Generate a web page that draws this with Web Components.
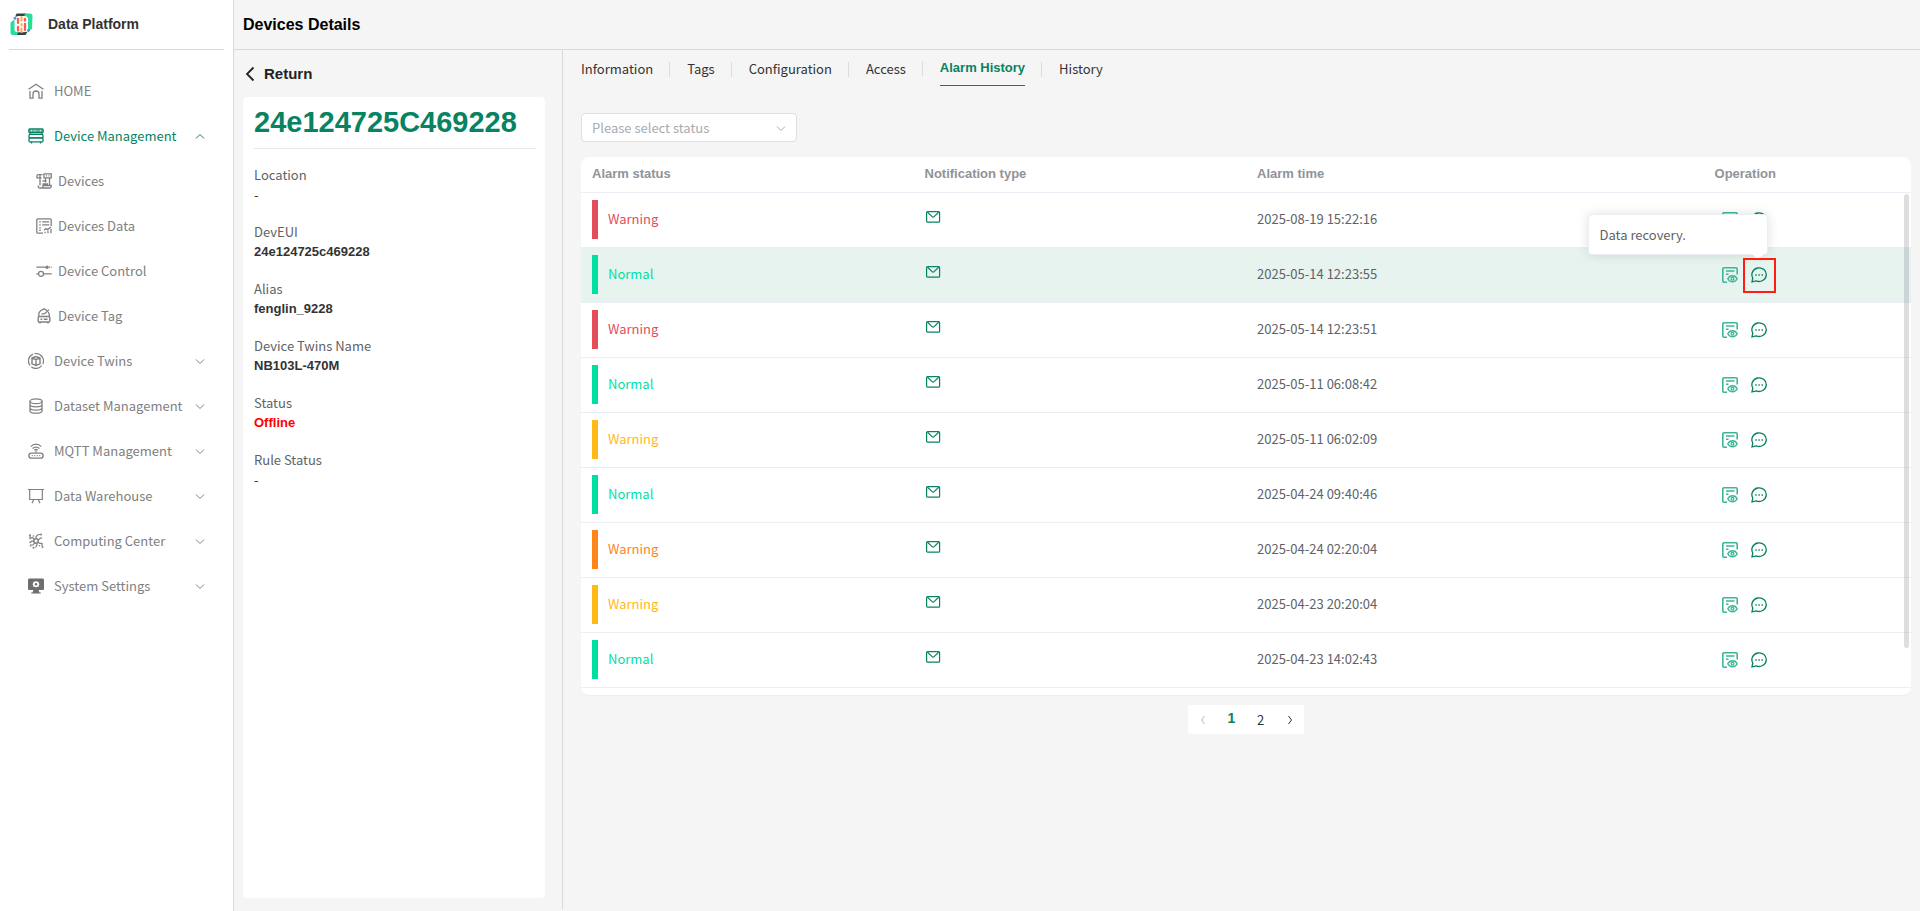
<!DOCTYPE html>
<html lang="en">
<head>
<meta charset="UTF-8">
<meta name="viewport" content="width=device-width, initial-scale=1">
<title>Data Platform</title>
<style>
  html, body {
    margin: 0;
    height: 100%;
  }
  body {
    font-family: "Noto Sans CJK SC", sans-serif;
    font-size: 13px;
    line-height: 20px;
    color: #606266;
    background: #f5f5f5;
    --bold-font: "Liberation Sans", Arial, sans-serif;
    --green: #078263;
    --line: #d9d9d9;
  }
</style>
</head>
<body>
<data-platform>
  <app-sidebar slot="sidebar"></app-sidebar>
  <page-header slot="header">Devices Details</page-header>
  <device-panel slot="panel" name="24e124725C469228">
    <device-field label="Location" class="empty">-</device-field>
    <device-field label="DevEUI">24e124725c469228</device-field>
    <device-field label="Alias">fenglin_9228</device-field>
    <device-field label="Device Twins Name">NB103L-470M</device-field>
    <device-field label="Status" class="offline">Offline</device-field>
    <device-field label="Rule Status" class="empty">-</device-field>
  </device-panel>
  <tab-bar active="Alarm History" tabs="Information,Tags,Configuration,Access,Alarm History,History"></tab-bar>
  <status-select placeholder="Please select status"></status-select>
  <alarm-table></alarm-table>
  <page-nav pages="2" current="1"></page-nav>
</data-platform>

<script>
const ICONS = {
  home: `<path d="M.6 6.300 8 1.200l7.400 5.100M2 8v7.200h3V11a3 3 0 0 1 6 0v4.200h3V8" stroke-width="1.300"/>`,
  server: `<g stroke-width="1.300"><rect x=".8" y=".9" width="14.400" height="3.600" rx="1" fill="currentColor" fill-opacity=".6"/><rect x="1" y="6.400" width="14" height="3.500" rx="1"/><rect x="1" y="9.900" width="14" height="4" rx="1"/><path d="M3.500 13.800v1.700M12.500 13.800v1.700M2 4.800v1.500M14 4.800v1.500"/></g><path d="M3 2.700h1M6.500 2.700h1M12 2.700h1" stroke="#fff"/>`,
  devices: `<path d="M1 5V2.800a1.200 1.200 0 0 1 1.200-1.200h4.300M.5 4.800h5M4 2v10.500M8 .8h7.300v4H8zM10 2.800h1M12.500 2.800h1M9.500 5v4.500M6.500 8h4M6.500 11h5.500M13.500 5v7M2.200 12.500v1a1.500 1.500 0 0 0 1.500 1.500h10a1.500 1.500 0 0 0 1.500-1.500v-1H7v1a1.500 1.500 0 0 1-1.500 1.500" stroke-width="1.300"/>`,
  data: `<path d="M7 15.200H1.800a1 1 0 0 1-1-1V1.800a1 1 0 0 1 1-1h12.400a1 1 0 0 1 1 1V8M3.200 3.800h1.600M6.200 3.800h7M3.200 6.800h1.600M6.200 6.800h7M3.200 9.800h1.600M3.200 12.400h1.600M9 15.300v-1.500M12 15.300v-2.500M15 15.300V11M8 12.200l2-1.600 1.500 1L15 9" stroke-width="1.300"/>`,
  control: `<path d="M.3 4.200h9M12.800 4.200H14M14.800 4.200h1M.3 10.800h2.200M7.700 10.800h8" stroke-width="1.300"/><circle cx="5" cy="10.800" r="2.500" stroke-width="1.300"/><circle cx="11" cy="4.200" r="1.700" fill="currentColor" stroke="none"/>`,
  tag: `<path d="M2.800 8.500V6C3 3.500 5 2 8 .8l3 1.700M13.200 8.500V6l-1-2M13 1.800 8.500 5.800M5.500 5.800h3" stroke-width="1.300"/><rect x="2.200" y="8.500" width="11.600" height="5.500" rx="1" stroke-width="1.400"/><path d="M4.500 11.200h1.800M7.800 11.200h3.700M4 14v1.600M12 14v1.600" stroke-width="1.400"/>`,
  twins: `<path d="M5 1.100A7.400 7.400 0 0 0 2 12.400M3.300 13.800A7.400 7.400 0 0 0 13.900 12.500M14.800 11A7.400 7.400 0 0 0 6.500.7" stroke-width="1.200"/><path d="m4 5 4-1.500L12 5v5.800l-4 1.700-4-1.700zM4 5.200l4 1.300 4-1.300M8 6.500v6" stroke-width="1.400"/><circle cx="13.700" cy="3" r=".8" fill="currentColor" stroke="none"/>`,
  dataset: `<g stroke-width="1.300"><ellipse cx="8" cy="3.200" rx="6" ry="2.400"/><path d="M2 3.200v9.500c0 1.300 2.700 2.500 6 2.500s6-1.200 6-2.500V3.200M2 6.500c0 1.300 2.700 2.300 6 2.300s6-1 6-2.300M2 9.700c0 1.300 2.700 2.400 6 2.400s6-1.100 6-2.400"/></g>`,
  mqtt: `<path d="M2.800 3.600c2.800-3.200 7.600-3.200 10.400 0M4.600 5.500c1.900-1.900 4.900-1.900 6.800 0M6.300 7.200c1-.9 2.400-.9 3.400 0M8 7.500v2.300" stroke-width="1.200"/><rect x=".9" y="10.100" width="14.200" height="5" rx="2.400" stroke-width="1.400"/><path d="M3.800 12.600h1M6.200 12.600h1M8.700 12.600h1M11.200 12.600h1" stroke-width="1.300"/>`,
  warehouse: `<path d="M0 1.500h16M1.700 1.500v10h12.600v-10M5.800 11.500 4 15.300M10.200 11.500l1.800 3.800" stroke-width="1.200"/>`,
  computing: `<circle cx="8" cy="8" r="2.200" stroke-width="1.500"/><path d="M8 5.500V3.500l2.500-2H13M10.300 7.200l2-2H14M10.200 9.500l1.500.8H14V13M8.500 10.500 9 12l-1.500 2.500M6.500 10 5 12H2.500v1.500M5.500 8.200H3.500L1.500 10M6 6.200 4.500 4.500 2 5.500V2.500" stroke-width="1.200"/><g fill="currentColor" stroke="none"><circle cx="13" cy="1.400" r="1"/><circle cx="14.500" cy="14" r="1"/><circle cx="2" cy="2.200" r="1"/><circle cx="5.500" cy="14.700" r="1"/><circle cx="11.500" cy="12.800" r=".8"/><circle cx="5.500" cy="3" r=".8"/></g>`,
  settings: `<g stroke="none"><rect y=".6" width="16" height="11.400" rx="1.200" fill="#6e6e6e"/><path d="M5.500 12h5l1 2.500h1.300v1H3.200v-1h1.300z" fill="#6e6e6e"/><path d="M8 3.100l1.200.7 1.400-.1.100 1.400.8 1.200-.8 1.200-.1 1.400-1.400-.1-1.200.7-1.200-.7-1.400.1-.1-1.400-.8-1.200.8-1.200.1-1.400 1.400.1z" fill="#fff"/><circle cx="8" cy="6.300" r="1.200" fill="#6e6e6e"/></g>`,
  up: `<path d="m4 10.500 4-4 4 4"/>`,
  down: `<path d="m4 6.500 4 4 4-4"/>`,
  prev: `<path d="m9.500 4-3 4 3 4"/>`,
  next: `<path d="m6.500 4 3 4-3 4"/>`,
  back: `<path d="M10.500 1.500 4 8l6.500 6.500" stroke-width="1.800"/>`,
  mail: `<rect x="1.600" y="2.600" width="13" height="10.600" rx="1" stroke-width="1.200"/><path d="m2.500 3.300 4.600 4.300a1.500 1.500 0 0 0 2 0l4.600-4.300" stroke-width="1.200"/>`,
  detail: `<path d="M5 15.200H2A1.200 1.200 0 0 1 .8 14V2A1.200 1.200 0 0 1 2 .8h12A1.200 1.200 0 0 1 15.200 2v5.500" stroke-width="1.600"/><path d="M4 4h8.500M4 7.200h2.500" stroke-width="1.400"/><path d="M5.800 11.700c2-4 7.400-4 9.400 0-2 4-7.400 4-9.400 0z" stroke-width="1.400"/><circle cx="10.500" cy="11.700" r="1.400" stroke-width="1.300"/>`,
  chat: `<path d="M1.800 11A7.200 6.800 0 1 1 5.200 13.900L1 14.900z" stroke-width="1.300"/><path d="M4.300 7.300h1.400v1.400H4.300zM7.400 7.300h1.400v1.400H7.400zM10.500 7.300h1.400v1.400h-1.400z" fill="currentColor" stroke="none"/>`
};

function icon(name, size = 16) {
  return `<svg width="${size}" height="${size}" viewBox="0 0 16 16" fill="none" stroke="currentColor" aria-hidden="true">${ICONS[name]}</svg>`;
}

const BASE = `
  *, *::before { box-sizing: border-box; }
  svg { display: block; flex: none; }
  button { font: inherit; color: inherit; background: none; border: 0; padding: 0; cursor: pointer; }
  a { color: inherit; text-decoration: none; }
`;

class BaseElement extends HTMLElement {
  constructor() {
    super();
    this.attachShadow({ mode: "open" });
  }

  connectedCallback() {
    this.shadowRoot.innerHTML = `<style>${BASE}${this.styles}</style>${this.template}`;
  }
}

class DataPlatform extends BaseElement {
  get styles() {
    return `
      :host { display: grid; grid-template-columns: 234px 1fr; min-height: 100vh; }
      .page { display: flex; flex-direction: column; min-width: 0; }
      .content { flex: 1; display: grid; grid-template-columns: 329px 1fr; margin-bottom: 2px; }
      main { min-width: 0; padding: 9px 9px 0 18px; }
    `;
  }

  get template() {
    return `
      <slot name="sidebar"></slot>
      <div class="page">
        <slot name="header"></slot>
        <div class="content">
          <slot name="panel"></slot>
          <main><slot></slot></main>
        </div>
      </div>
    `;
  }
}

class AppSidebar extends BaseElement {
  get styles() {
    return `
      :host { display: block; background: #fff; border-right: 1px solid var(--line); }
      .brand {
        display: flex; align-items: center; gap: 15px; height: 50px;
        margin: 0 9px; padding-bottom: 1px; border-bottom: 1px solid var(--line);
        font: bold 14px/20px var(--bold-font); color: #333;
      }
      nav { display: flex; flex-direction: column; padding-top: 18px; }
    `;
  }

  get template() {
    return `
      <div class="brand">
        <svg width="24" height="24" viewBox="0 0 24 24">
          <path d="M8 1.500h9.500L15.500 4H9L6.500 5C6.500 3 7 2 8 1.500z" fill="#2b4b42"/>
          <path d="M16 1.500h5A2.500 2.500 0 0 1 23.500 4l-.5 13-4 2.500V7.500c0-2.300-.8-3.300-3.500-3.500z" fill="#27dd9a"/>
          <path d="M1.500 10.500 5.500 7.500v9c0 2.800 1 3.700 3.500 3.700L8.500 23H4a2.500 2.500 0 0 1-2.500-2.500z" fill="#27dd9a"/>
          <path d="M8 23h8.500l2-3.200c-1.500.4-3 .4-4.500.4H9z" fill="#2b4b42"/>
          <g stroke-width="2" stroke-linecap="round">
            <path d="M9 7v4M9 15v3.500M16 7v1.500M16 12v6" stroke="#f95b55" stroke-width="2.300"/>
            <path d="M12.500 5v3.500M12.500 12v1.500M12.500 16.500V20" stroke="#fdb04c"/>
          </g>
          <circle cx="6" cy="6.300" r="1.400" fill="#418dff"/><circle cx="19.500" cy="18.500" r="1.400" fill="#418dff"/>
        </svg>
        Data Platform
      </div>
      <nav aria-label="Main">
        <nav-item icon="home">HOME</nav-item>
        <nav-item icon="server" arrow="up" class="active">Device Management</nav-item>
        <nav-item icon="devices" class="sub">Devices</nav-item>
        <nav-item icon="data" class="sub">Devices Data</nav-item>
        <nav-item icon="control" class="sub">Device Control</nav-item>
        <nav-item icon="tag" class="sub">Device Tag</nav-item>
        <nav-item icon="twins" arrow="down">Device Twins</nav-item>
        <nav-item icon="dataset" arrow="down">Dataset Management</nav-item>
        <nav-item icon="mqtt" arrow="down">MQTT Management</nav-item>
        <nav-item icon="warehouse" arrow="down">Data Warehouse</nav-item>
        <nav-item icon="computing" arrow="down">Computing Center</nav-item>
        <nav-item icon="settings" arrow="down">System Settings</nav-item>
      </nav>
    `;
  }
}

class NavItem extends BaseElement {
  get styles() {
    return `
      :host { display: block; color: #808080; }
      :host(.active) { color: var(--green); }
      a { display: flex; align-items: center; gap: 10px; height: 45px; padding: 0 25px 0 28px; }
      :host(.sub) a { gap: 6px; padding-left: 36px; }
      .label { flex: 1; white-space: nowrap; }
      .label + svg { margin-left: -10px; }
    `;
  }

  get template() {
    const arrow = this.getAttribute("arrow");
    return `
      <a href="#">
        ${icon(this.getAttribute("icon"))}
        <span class="label"><slot></slot></span>
        ${arrow ? icon(arrow) : ""}
      </a>
    `;
  }
}

class PageHeader extends BaseElement {
  get styles() {
    return `
      :host { display: block; border-bottom: 1px solid var(--line); }
      h1 { margin: 0; padding: 0 9px; font: bold 16px/49px var(--bold-font); color: #000; }
    `;
  }

  get template() {
    return `<h1><slot></slot></h1>`;
  }
}

class DevicePanel extends BaseElement {
  get styles() {
    return `
      :host { display: flex; flex-direction: column; padding: 0 17px 11px 9px; border-right: 1px solid var(--line); }
      .return {
        display: flex; align-items: center; gap: 5px; height: 47px;
        font: bold 15px/20px var(--bold-font); color: #222;
      }
      .card { flex: 1; background: #fff; border-radius: 4px; padding: 0 9px 0 11px; }
      h2 {
        margin: 0 0 16px; height: 52px; border-bottom: 1px solid #e8e8e8;
        font: bold 29px/51px var(--bold-font); color: var(--green);
      }
    `;
  }

  get template() {
    return `
      <button class="return" type="button">${icon("back")}Return</button>
      <section class="card">
        <h2>${this.getAttribute("name")}</h2>
        <slot></slot>
      </section>
    `;
  }
}

class DeviceField extends BaseElement {
  get styles() {
    return `
      :host { display: block; margin-bottom: 18px; }
      .value { height: 19px; font: bold 13px/19px var(--bold-font); color: #333; }
      :host(.offline) .value { color: #f00; }
      :host(.empty) .value { font: inherit; }
    `;
  }

  get template() {
    return `
      <div>${this.getAttribute("label")}</div>
      <div class="value"><slot></slot></div>
    `;
  }
}

class TabBar extends BaseElement {
  get styles() {
    return `
      :host { display: block; }
      nav { display: flex; align-items: flex-start; }
      a { line-height: 20px; color: #333; }
      a + a::before {
        content: ""; display: inline-block; vertical-align: -3px;
        width: 1px; height: 15px; margin: 0 17px 0 16px; background: #dcdcdc;
      }
      .text { display: inline-block; }
      a.active { display: flex; font: bold 13px/17px var(--bold-font); color: var(--green); }
      a.active::before { margin-top: 2px; }
      .active .text { height: 27px; border-bottom: 1px solid var(--green); }
    `;
  }

  get template() {
    const active = this.getAttribute("active");
    const links = this.getAttribute("tabs").split(",").map((tab) =>
      `<a href="#" class="${tab === active ? "active" : ""}"><span class="text">${tab}</span></a>`);
    return `<nav aria-label="Device">${links.join("")}</nav>`;
  }
}

class StatusSelect extends BaseElement {
  get styles() {
    return `
      :host { display: block; margin: 27px 0 15px; }
      label { display: grid; width: 216px; align-items: center; }
      select, svg { grid-area: 1 / 1; }
      select {
        appearance: none; width: 100%; height: 29px; padding: 0 30px 0 10px;
        font: inherit; color: #a8abb2; background: #fff;
        border: 1px solid #dcdfe6; border-radius: 4px;
      }
      svg { justify-self: end; margin-right: 8px; color: #a8abb2; pointer-events: none; }
    `;
  }

  get template() {
    const text = this.getAttribute("placeholder");
    return `
      <label>
        <select aria-label="Alarm status">
          <option value="">${text}</option>
          <option>Warning</option>
          <option>Normal</option>
        </select>
        ${icon("down")}
      </label>
    `;
  }
}

const RED = "#e34d59";
const GREEN = "#00dfa2";
const YELLOW = "#ffb919";
const ORANGE = "#ff851b";

const ALARMS = [
  { status: "Warning", color: RED, time: "2025-08-19 15:22:16" },
  { status: "Normal", color: GREEN, time: "2025-05-14 12:23:55", tip: "Data recovery." },
  { status: "Warning", color: RED, time: "2025-05-14 12:23:51" },
  { status: "Normal", color: GREEN, time: "2025-05-11 06:08:42" },
  { status: "Warning", color: YELLOW, time: "2025-05-11 06:02:09" },
  { status: "Normal", color: GREEN, time: "2025-04-24 09:40:46" },
  { status: "Warning", color: ORANGE, time: "2025-04-24 02:20:04" },
  { status: "Warning", color: YELLOW, time: "2025-04-23 20:20:04" },
  { status: "Normal", color: GREEN, time: "2025-04-23 14:02:43" }
];

class AlarmTable extends BaseElement {
  get styles() {
    return `
      :host {
        display: block; position: relative; padding-bottom: 7px;
        background: #fff; border-bottom: 1px solid #ebeef5; border-radius: 8px;
      }
      table { width: 100%; table-layout: fixed; border-collapse: separate; border-spacing: 0; }
      th, td { padding: 0 11px 2px; text-align: left; border-bottom: 1px solid #ebeef5; }
      th { height: 36px; font: bold 13px/20px var(--bold-font); color: #909399; }
      td { height: 55px; }
      td:last-child { padding-bottom: 0; }
      col:nth-child(1), col:nth-child(2) { width: 25%; }
      col:nth-child(3) { width: 34.4%; }
      tr.current td { background: #e6f3ef; }
      .status { display: flex; align-items: center; gap: 10px; color: var(--status); }
      .status::before { content: ""; width: 6px; height: 39px; background: var(--status); }
      .mail { padding-bottom: 4px; color: var(--green); }
      .actions { display: flex; gap: 13px; padding-left: 7px; }
      .actions button { color: #3fb598; }
      .actions alarm-note { color: var(--green); }
      .thumb {
        position: absolute; top: 37px; right: 2px; width: 5px; height: 454px;
        border-radius: 3px; background: rgba(144, 147, 153, .3);
      }
    `;
  }

  row({ status, color, time, tip }) {
    return `
      <tr class="${tip ? "current" : ""}">
        <td><div class="status" style="--status: ${color}">${status}</div></td>
        <td><div class="mail">${icon("mail")}</div></td>
        <td>${time}</td>
        <td>
          <div class="actions">
            <button type="button" aria-label="View alarm">${icon("detail")}</button>
            <alarm-note>${tip || ""}</alarm-note>
          </div>
        </td>
      </tr>
    `;
  }

  get template() {
    return `
      <table>
        <colgroup><col><col><col><col></colgroup>
        <thead>
          <tr><th>Alarm status</th><th>Notification type</th><th>Alarm time</th><th>Operation</th></tr>
        </thead>
        <tbody>${ALARMS.map(this.row).join("")}</tbody>
      </table>
      <div class="thumb"></div>
    `;
  }
}

// Chat button; its text, if any, is shown in an open popover above it.
class AlarmNote extends BaseElement {
  get styles() {
    return `
      :host { display: block; position: relative; }
      button { display: block; }
      .mark { position: absolute; top: -9px; left: -8px; width: 33px; height: 35px; border: 2px solid #ff1c10; }
      .tip {
        position: absolute; right: -1px; bottom: 28px; width: 180px; height: 41px; padding: 0 11px;
        line-height: 40px; color: #606266; background: #fff;
        border: 1px solid #ebeef5; border-radius: 4px; box-shadow: 0 0 12px rgba(0, 0, 0, .12);
      }
      .tip::before {
        content: ""; position: absolute; right: 5px; bottom: -4px;
        width: 8px; height: 8px; background: #fff; transform: rotate(45deg);
      }
    `;
  }

  get template() {
    const tip = this.textContent
      ? `<div class="tip" role="tooltip"><slot></slot></div><div class="mark"></div>`
      : "";
    return `<button type="button" aria-label="Alarm note">${icon("chat")}</button>${tip}`;
  }
}

class PageNav extends BaseElement {
  get styles() {
    return `
      :host { display: flex; justify-content: center; margin-top: 9px; }
      nav { display: flex; background: #fff; border-radius: 2px; }
      button { display: flex; align-items: center; justify-content: center; width: 29px; height: 29px; color: #303133; }
      button:disabled { color: #b5b8be; }
      .current { padding-bottom: 3px; font: bold 14px/20px var(--bold-font); color: var(--green); }
    `;
  }

  get template() {
    const current = Number(this.getAttribute("current"));
    let pages = "";
    for (let i = 1; i <= Number(this.getAttribute("pages")); i++) {
      pages += `<button type="button" class="${i === current ? "current" : ""}">${i}</button>`;
    }
    return `
      <nav aria-label="Pages">
        <button type="button" aria-label="Previous page" disabled>${icon("prev")}</button>
        ${pages}
        <button type="button" aria-label="Next page">${icon("next")}</button>
      </nav>
    `;
  }
}

customElements.define("data-platform", DataPlatform);
customElements.define("app-sidebar", AppSidebar);
customElements.define("nav-item", NavItem);
customElements.define("page-header", PageHeader);
customElements.define("device-panel", DevicePanel);
customElements.define("device-field", DeviceField);
customElements.define("tab-bar", TabBar);
customElements.define("status-select", StatusSelect);
customElements.define("alarm-table", AlarmTable);
customElements.define("alarm-note", AlarmNote);
customElements.define("page-nav", PageNav);
</script>
</body>
</html>
